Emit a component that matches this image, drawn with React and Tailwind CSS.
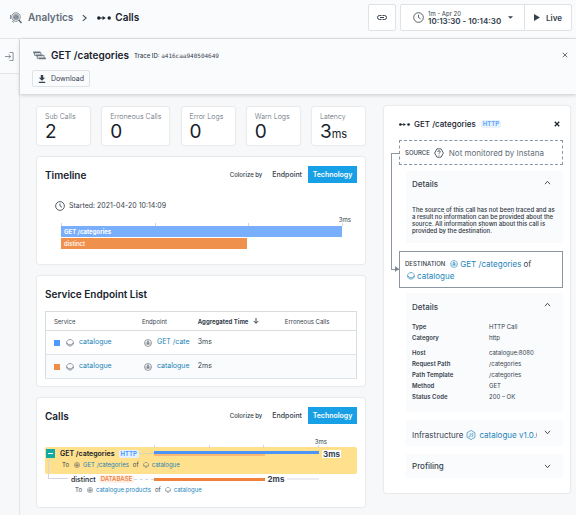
import React from "react";

const stats = [
  { label: "Sub Calls", value: "2" },
  { label: "Erroneous Calls", value: "0" },
  { label: "Error Logs", value: "0" },
  { label: "Warn Logs", value: "0" },
  { label: "Latency", value: "3", unit: "ms" },
];

const destination = [
  [
    ["Type", "HTTP Call"],
    ["Category", "http"],
  ],
  [
    ["Host", "catalogue:8080"],
    ["Request Path", "/categories"],
    ["Path Template", "/categories"],
    ["Method", "GET"],
    ["Status Code", "200 – OK"],
  ],
];

const services = [
  { color: "bg-[#4c9aff]", service: "catalogue", endpoint: "GET /cate", time: "3ms" },
  { color: "bg-[#f08c46]", service: "catalogue", endpoint: "catalogue", time: "2ms" },
];

function CallsIcon({ className }) {
  return (
    <svg viewBox="0 0 14 6" className={className} fill="currentColor" aria-hidden="true">
      <circle cx="1.8" cy="3" r="1.7" />
      <circle cx="12.2" cy="3" r="1.7" />
      <path d="M3 2.5h2.500v1H3z" />
      <path d="M5.500 1L8.800 3 5.500 5z" />
    </svg>
  );
}

function AnalyticsIcon() {
  return (
    <svg viewBox="0 0 24 24" className="size-3 shrink-0 text-[#5b6770]" fill="none" stroke="currentColor" strokeWidth="1.5" aria-hidden="true">
      <circle cx="12" cy="10" r="8.5" />
      <circle cx="12" cy="10" r="5.5" fill="#a5adb4" stroke="#8b959d" />
      <path d="M9 13V9M12 14V6M15 13V8" stroke="#66727c" />
      <path d="M17.500 16l5.500 6" strokeWidth="2.8" />
      <path d="M1 6v8M4 18l4 3" />
    </svg>
  );
}

function TraceIcon() {
  return (
    <svg viewBox="0 0 14 10" className="h-[9px] w-[13px] shrink-0 text-[#66727c]" fill="none" stroke="currentColor" aria-hidden="true">
      <path d="M0 1.500h7.500M3 4.800h7.500M6 8.200h8" strokeWidth="2" />
      <path d="M1.500 2v2.800H3M4.500 5v3.200H6M7.500 1.500h1v2.500M10.500 4.800h1.500v2.500" />
    </svg>
  );
}

function ClockIcon({ className }) {
  return (
    <svg viewBox="0 0 24 24" className={className} fill="none" stroke="currentColor" strokeWidth="2" aria-hidden="true">
      <circle cx="12" cy="12" r="10.5" />
      <path d="M12 6v6l4.500 3" />
    </svg>
  );
}

function ServiceIcon({ className }) {
  return (
    <svg viewBox="0 0 24 24" className={className} fill="none" stroke="currentColor" strokeWidth="2" aria-hidden="true">
      <path d="M8 2h8l6 6v7l-6 6H8l-6-6V8z" />
      <path d="M2 14h4l2 3h8l2-3h4" />
    </svg>
  );
}

function EndpointIcon({ className }) {
  return (
    <svg viewBox="0 0 24 24" className={className} fill="none" stroke="currentColor" strokeWidth="1.6" aria-hidden="true">
      <circle cx="12" cy="12" r="10.5" />
      <path d="M12 4v4M6 17v-6l3-3h6l3 3v6M8 17h8" />
      <circle cx="12" cy="12.5" r="2" fill="currentColor" />
    </svg>
  );
}

function Chevron({ up }) {
  return (
    <svg viewBox="0 0 8 6" className="h-[5px] w-[7px] shrink-0 text-[#46525d]" fill="none" stroke="currentColor" strokeWidth="1.2" aria-hidden="true">
      <path d={up ? "M1 5l3-3.500L7 5" : "M1 1l3 3.500L7 1"} />
    </svg>
  );
}

function Cross({ className }) {
  return (
    <svg viewBox="0 0 8 8" className={className} fill="none" stroke="currentColor" aria-hidden="true">
      <path d="M1 1l6 6M7 1L1 7" />
    </svg>
  );
}

function Card({ children, className = "" }) {
  return <section className={`rounded-xs bg-white shadow-[0_0_2px_rgba(0,0,0,0.2)] ${className}`}>{children}</section>;
}

function CardHeader({ title }) {
  return (
    <header className="flex h-[17px] items-center">
      <h2 className="flex-1 text-[10px] leading-[18px] font-semibold text-[#17222c]">{title}</h2>
      <span className="mr-[4px] text-[6px] leading-[18px] font-medium">Colorize by</span>
      <button className="h-full px-[6px] text-[7px] leading-[18px] font-medium">Endpoint</button>
      <button className="h-full w-[49px] bg-[#18a0e6] text-center text-[7px] leading-[18px] font-semibold text-white">Technology</button>
    </header>
  );
}

function Ticks() {
  return (
    <div className="flex h-[3px] justify-between">
      {[0, 1, 2, 3].map((n) => (
        <span key={n} className="w-px bg-[#d3d7db]" />
      ))}
    </div>
  );
}

function Link({ children }) {
  return (
    <a href="#" className="text-[#2184b8]">
      {children}
    </a>
  );
}

function TopBar() {
  return (
    <header className="flex h-[39px] items-start justify-between border-b border-[#e3e6e9] bg-[#fafbfd] pt-1 pr-1 pl-[10px]">
      <nav className="flex h-[27px] items-center text-[10px] font-semibold">
        <AnalyticsIcon />
        <a href="#" className="ml-[6px] text-[#5f6d78]">Analytics</a>
        <svg viewBox="0 0 6 9" className="mr-[10px] ml-[9px] h-[8px] w-[5px] text-[#46525d]" fill="none" stroke="currentColor" strokeWidth="1.4" aria-hidden="true">
          <path d="M1 1l4 3.500L1 8" />
        </svg>
        <CallsIcon className="h-[6px] w-[14px] text-[#17222c]" />
        <span className="ml-1 text-[#17222c]">Calls</span>
      </nav>
      <div className="flex h-[27px] gap-1">
        <button aria-label="Copy link" className="flex w-[28px] items-center justify-center rounded-xs border border-[#dfe3e6] bg-white">
          <svg viewBox="0 0 20 10" className="h-[5px] w-[10px]" fill="none" stroke="currentColor" strokeWidth="2" aria-hidden="true">
            <path d="M9 9H5a4 4 0 010-8h4M11 1h4a4 4 0 010 8h-4M6 5h8" />
          </svg>
        </button>
        <div className="flex rounded-xs border border-[#dfe3e6] bg-white">
          <button className="flex w-[124px] items-center border-r border-[#dfe3e6] pl-3 text-left">
            <ClockIcon className="size-[11px] text-[#46525d]" />
            <span className="ml-1">
              <span className="block text-[6px] leading-[7px]">1m - Apr 20</span>
              <span className="block text-[8px] leading-[8px] font-semibold">10:13:30 - 10:14:30</span>
            </span>
            <svg viewBox="0 0 6 3" className="ml-[7px] h-[3px] w-[5px]" fill="currentColor" aria-hidden="true">
              <path d="M0 0h6L3 3z" />
            </svg>
          </button>
          <button className="flex w-[46px] items-center justify-center gap-[6px] text-[8px] font-semibold">
            <svg viewBox="0 0 6 7" className="h-[7px] w-[6px]" fill="currentColor" aria-hidden="true">
              <path d="M0 0l6 3.500L0 7z" />
            </svg>
            Live
          </button>
        </div>
      </div>
    </header>
  );
}

function TraceHeader() {
  return (
    <header className="relative h-[55px] bg-[#fafbfd] px-3 pt-[9px] shadow-[0_1px_4px_rgba(0,0,0,0.2)]">
      <div className="flex h-[14px] items-center pl-px">
        <TraceIcon />
        <h1 className="ml-[5px] text-[10px] font-semibold text-[#17222c]">GET /categories</h1>
        <p className="ml-[5px] flex-1 text-[6px] font-medium">
          Trace ID: <span className="font-['DejaVu_Sans_Mono',monospace]">a416caa940504649</span>
        </p>
        <button aria-label="Close trace" className="-mr-1">
          <Cross className="size-[6px]" />
        </button>
      </div>
      <button className="mt-2 flex h-[17px] w-[58px] items-center justify-center gap-[5px] rounded-xs border border-[#dfe3e6] text-[7px] leading-[15px]">
        <svg viewBox="0 0 10 10" className="size-[8px]" fill="currentColor" aria-hidden="true">
          <path d="M3.500 0h3v3.500H9L5 7.200 1 3.500h2.500zM1 8.500h8V10H1z" />
        </svg>
        Download
      </button>
    </header>
  );
}

function Stats() {
  return (
    <dl className="flex justify-between">
      {stats.map((s) => (
        <Card key={s.label} className="h-[38px] min-w-[53px] px-2 pt-[5px]">
          <dt className="text-[7px] leading-[9px] font-light text-[#5f6d78]">{s.label}</dt>
          <dd className="text-[19px] leading-[22px] text-[#17222c]">
            {s.value}
            {s.unit && <span className="text-[11px]">{s.unit}</span>}
          </dd>
        </Card>
      ))}
    </dl>
  );
}

function Timeline() {
  return (
    <Card className="px-2 pt-[9px] pb-[15px]">
      <CardHeader title="Timeline" />
      <div className="mt-[17px] ml-[10px] flex items-center gap-1 text-[7px] leading-[11px]">
        <ClockIcon className="size-[10px]" />
        Started: 2021-04-20 10:14:09
      </div>
      <div className="mr-[14px] ml-4">
        <div className="-mr-2 mt-[5px] text-right text-[6px] leading-[7px]">3ms</div>
        <Ticks />
        <div className="h-[11px] w-[99.5%] bg-[#79aefa] pl-[3px] text-[6px] leading-[11px] font-bold text-white">GET /categories</div>
        <div className="mt-px h-[11px] w-[66%] bg-[#f0904d] pl-[3px] text-[6px] leading-[11px] font-medium text-white">distinct</div>
      </div>
    </Card>
  );
}

function EndpointList() {
  return (
    <Card className="px-2 pt-[9px] pb-[7px]">
      <h2 className="text-[10px] leading-[18px] font-semibold text-[#17222c]">Service Endpoint List</h2>
      <table className="mt-2 w-full table-fixed border-collapse border border-[#d9dde0] text-left text-[7px]">
        <thead>
          <tr className="h-[19px] border-b border-[#d9dde0] text-[6px]">
            <th className="w-[31%] pl-2 font-normal">Service</th>
            <th className="w-[17%] font-normal">Endpoint</th>
            <th className="w-[28%] pl-[3px] font-bold">
              <span className="flex items-center gap-[5px]">
                Aggregated Time
                <svg viewBox="0 0 8 8" className="size-[6px]" fill="none" stroke="currentColor" strokeWidth="1.3" aria-hidden="true">
                  <path d="M4 0v7M1 4l3 3 3-3" />
                </svg>
              </span>
            </th>
            <th className="pl-[3px] font-normal">Erroneous Calls</th>
          </tr>
        </thead>
        <tbody>
          {services.map((s) => (
            <tr key={s.time} className="h-[24px] border-b border-[#dfe3e6] even:bg-[#fafbfd]">
              <td className="pl-2">
                <span className="flex items-center">
                  <span className={`size-[6px] ${s.color}`} />
                  <ServiceIcon className="mr-[5px] ml-[6px] size-[8px] text-[#5f6d78]" />
                  <Link>{s.service}</Link>
                </span>
              </td>
              <td className="pl-[2px]">
                <span className="flex items-center">
                  <EndpointIcon className="mr-[5px] size-[8px] shrink-0 text-[#46525d]" />
                  <span className="whitespace-nowrap">
                    <Link>{s.endpoint}</Link>
                  </span>
                </span>
              </td>
              <td className="pl-[3px]">{s.time}</td>
              <td />
            </tr>
          ))}
        </tbody>
      </table>
    </Card>
  );
}

function CallTarget({ endpoint, service, className }) {
  return (
    <p className={`flex items-center text-[6px] leading-[9px] ${className}`}>
      To
      <EndpointIcon className="mr-[3px] ml-[5px] size-[6px] text-[#46525d]" />
      <Link>{endpoint}</Link>
      <span className="ml-1">of</span>
      <ServiceIcon className="mr-[3px] ml-1 size-[6px] text-[#5f6d78]" />
      <Link>{service}</Link>
    </p>
  );
}

function Calls() {
  return (
    <Card className="px-2 pt-[9px] pb-[13px]">
      <CardHeader title="Calls" />
      <div className="mt-[14px] mr-[38px] ml-[109px]">
        <div className="-mr-2 text-right text-[6px] leading-[7px]">3ms</div>
        <Ticks />
      </div>
      <div className="-mt-px h-[27px] rounded-xs bg-[#ffe08c]">
        <div className="flex h-[13px] items-center">
          <div className="flex w-[109px] items-center">
            <button aria-label="Collapse" className="ml-px flex size-[9px] items-center justify-center bg-[#12aaa5]">
              <span className="h-px w-[5px] bg-white" />
            </button>
            <span className="ml-[5px] text-[7px] leading-[9px] font-semibold text-[#17222c]">GET /categories</span>
            <span className="ml-1 rounded-xs bg-[#e3f1ff] px-[2px] text-[6px] leading-[8px] font-bold text-[#4c9aff]">HTTP</span>
            <span className="flex-1 border-t border-dashed border-[#d3d0c0]" />
          </div>
          <div className="flex-1">
            <div className="h-[3px] bg-[#4c94f6]" />
            <div className="mr-[33%] h-[2px] bg-[#fbb871]" />
          </div>
          <div className="flex w-[38px] pl-[3px]">
            <span className="bg-white px-px text-[8px] leading-[8px] font-bold">3ms</span>
          </div>
        </div>
        <CallTarget endpoint="GET /categories" service="catalogue" className="ml-[17px]" />
      </div>
      <div className="flex h-[10px] items-center">
        <div className="flex w-[109px] items-center">
          <span className="-mt-[19px] ml-[3px] h-[19px] w-[20px] border-b border-l border-[#d3d7db]" />
          <span className="ml-[3px] text-[7px] leading-[9px] font-medium text-[#17222c]">distinct</span>
          <span className="ml-[3px] rounded-xs bg-[#fdf1e8] px-[2px] text-[6px] leading-[8px] font-semibold text-[#f0823c]">DATABASE</span>
          <span className="flex-1 border-t border-dashed border-[#d3d7db]" />
        </div>
        <div className="mr-[38px] flex flex-1 items-center">
          <div className="h-[3px] w-[67%] bg-[#f0823c]" />
          <span className="mx-[3px] text-[8px] leading-[8px] font-bold">2ms</span>
          <span className="h-[2px] flex-1 bg-[#eceef1]" />
        </div>
      </div>
      <CallTarget endpoint="catalogue.products" service="catalogue" className="mt-px ml-[30px]" />
    </Card>
  );
}

function DetailPanel() {
  return (
    <Card className="w-[186px] shrink-0 self-start pt-[11px] pr-[7px] pb-[15px] pl-[15px]">
      <div className="flex h-[14px] items-center pr-[3px]">
        <CallsIcon className="h-[5px] w-[11px] text-[#17222c]" />
        <h2 className="ml-1 text-[8px] font-medium text-[#17222c]">GET /categories</h2>
        <span className="ml-[5px] rounded-xs bg-[#e8f3ff] px-[2px] text-[6px] leading-[8px] font-bold text-[#5fa4fb]">HTTP</span>
        <button aria-label="Close details" className="ml-auto">
          <Cross className="size-[6px] stroke-[1.6] text-[#17222c]" />
        </button>
      </div>

      <div className="relative mt-[9px]">
        <div className="absolute top-[13px] bottom-[18px] -left-2 w-2 border-y border-l border-[#8a96a1]">
          <svg viewBox="0 0 4 6" className="absolute right-0 -bottom-[3px] h-[6px] w-[4px]" fill="#7d8892" aria-hidden="true">
            <path d="M0 0l4 3-4 3z" />
          </svg>
        </div>
        <div className="flex h-[25px] items-center border border-dashed border-[#8a96a1] pl-[5px]">
          <span className="text-[6px] font-medium">SOURCE</span>
          <svg viewBox="0 0 24 24" className="mr-[5px] ml-1 size-[10px]" fill="none" stroke="currentColor" strokeWidth="2" aria-hidden="true">
            <path d="M7 2h10l5.500 10L17 22H7L1.500 12z" />
            <path d="M9 9.500a3 3 0 116 0c0 2-3 2-3 4M12 16v2" />
          </svg>
          <span className="text-[8px] text-[#5f6d78]">Not monitored by Instana</span>
        </div>
        <section className="mt-[6px] ml-[7px] h-[72px] bg-[#fafbfd] px-[6px] pt-[7px]">
          <div className="flex justify-between pr-[6px]">
            <h3 className="text-[8px] leading-[12px] font-medium">Details</h3>
            <button aria-label="Collapse source details" className="flex h-[9px] items-center"><Chevron up /></button>
          </div>
          <p className="mt-4 text-[6px] leading-[7px] font-medium text-[#2b3640]">
            The source of this call has not been traced and as a result no information can be provided about the source. All information shown about this call is provided by the destination.
          </p>
        </section>
        <div className="mt-2 h-[37px] border border-[#8a96a1] px-[5px] pt-[6px] text-[8px] leading-[12px]">
          <div className="flex items-center">
            <span className="text-[6px] font-medium">DESTINATION</span>
            <EndpointIcon className="mr-[2px] ml-[5px] size-[8px] text-[#2184b8]" />
            <Link>GET /categories</Link>
            <span className="ml-[2px]">of</span>
          </div>
          <div className="flex items-center gap-[2px] pl-[2px]">
            <ServiceIcon className="size-[8px] text-[#2184b8]" />
            <Link>catalogue</Link>
          </div>
        </div>
      </div>

      <section className="mt-[5px] ml-[7px] bg-[#fafbfd] px-[6px] pt-[7px] pb-[10px]">
        <div className="flex justify-between pr-[6px]">
          <h3 className="text-[8px] leading-[14px] font-medium">Details</h3>
          <button aria-label="Collapse destination details" className="flex h-[9px] items-center"><Chevron up /></button>
        </div>
        <div className="mt-[7px] flex flex-col gap-1 text-[6px] leading-[11px]">
          {destination.map((group, i) => (
            <dl key={i} className="grid grid-cols-[77px_1fr]">
              {group.map(([term, value]) => (
                <React.Fragment key={term}>
                  <dt className="font-semibold">{term}</dt>
                  <dd>{value}</dd>
                </React.Fragment>
              ))}
            </dl>
          ))}
        </div>
      </section>

      <section className="mt-2 ml-[7px] flex h-[26px] bg-[#fafbfd] px-[6px] pt-[9px] text-[8px] leading-[12px]">
        <h3>Infrastructure</h3>
        <svg viewBox="0 0 24 24" className="mt-px ml-[3px] size-[10px] shrink-0 text-[#2184b8]" fill="none" stroke="currentColor" strokeWidth="1.6" aria-hidden="true">
          <path d="M12 1l9.500 5.500v11L12 23l-9.500-5.500v-11z" />
          <path d="M10 8v7c0 2-3 2-4 1M18 9c-4-2-6 1-3 2.500s3 5-2 3.500" />
        </svg>
        <span className="ml-[3px] flex-1 overflow-hidden whitespace-nowrap">
          <Link>catalogue v1.0.0</Link>
        </span>
        <button aria-label="Expand infrastructure" className="mr-[6px] ml-[7px] flex h-[6px] items-center"><Chevron /></button>
      </section>
      <section className="mt-2 ml-[7px] flex h-[24px] items-center justify-between bg-[#fafbfd] pr-3 pl-[6px] text-[8px]">
        <h3 className="font-medium">Profiling</h3>
        <button aria-label="Expand profiling"><Chevron /></button>
      </section>
    </Card>
  );
}

export default function App() {
  return (
    <div className="flex min-h-screen flex-col overflow-hidden bg-[#f7f8fa] font-[Inter,'Liberation_Sans',sans-serif] text-[#35414c]">
      <TopBar />
      <div className="flex flex-1">
        <aside className="w-5 shrink-0 border-r border-[#e3e6e9]">
          <button aria-label="Open sidebar" className="flex h-[35px] w-full items-center justify-center border-b border-[#e3e6e9] bg-[#fafbfd] text-[#7d8892]">
            <svg viewBox="0 0 10 10" className="size-[9px]" fill="none" stroke="currentColor" aria-hidden="true">
              <path d="M0 5h6M4 2.800L6.300 5 4 7.200M5 .5h4v9H5" />
            </svg>
          </button>
        </aside>
        <div className="min-w-0 flex-1">
          <TraceHeader />
          <div className="flex gap-[19px] pt-3 pr-[6px] pb-[6px] pl-[17px]">
            <main className="flex min-w-0 flex-1 flex-col gap-3 pt-px">
              <Stats />
              <Timeline />
              <EndpointList />
              <Calls />
            </main>
            <DetailPanel />
          </div>
        </div>
      </div>
    </div>
  );
}
